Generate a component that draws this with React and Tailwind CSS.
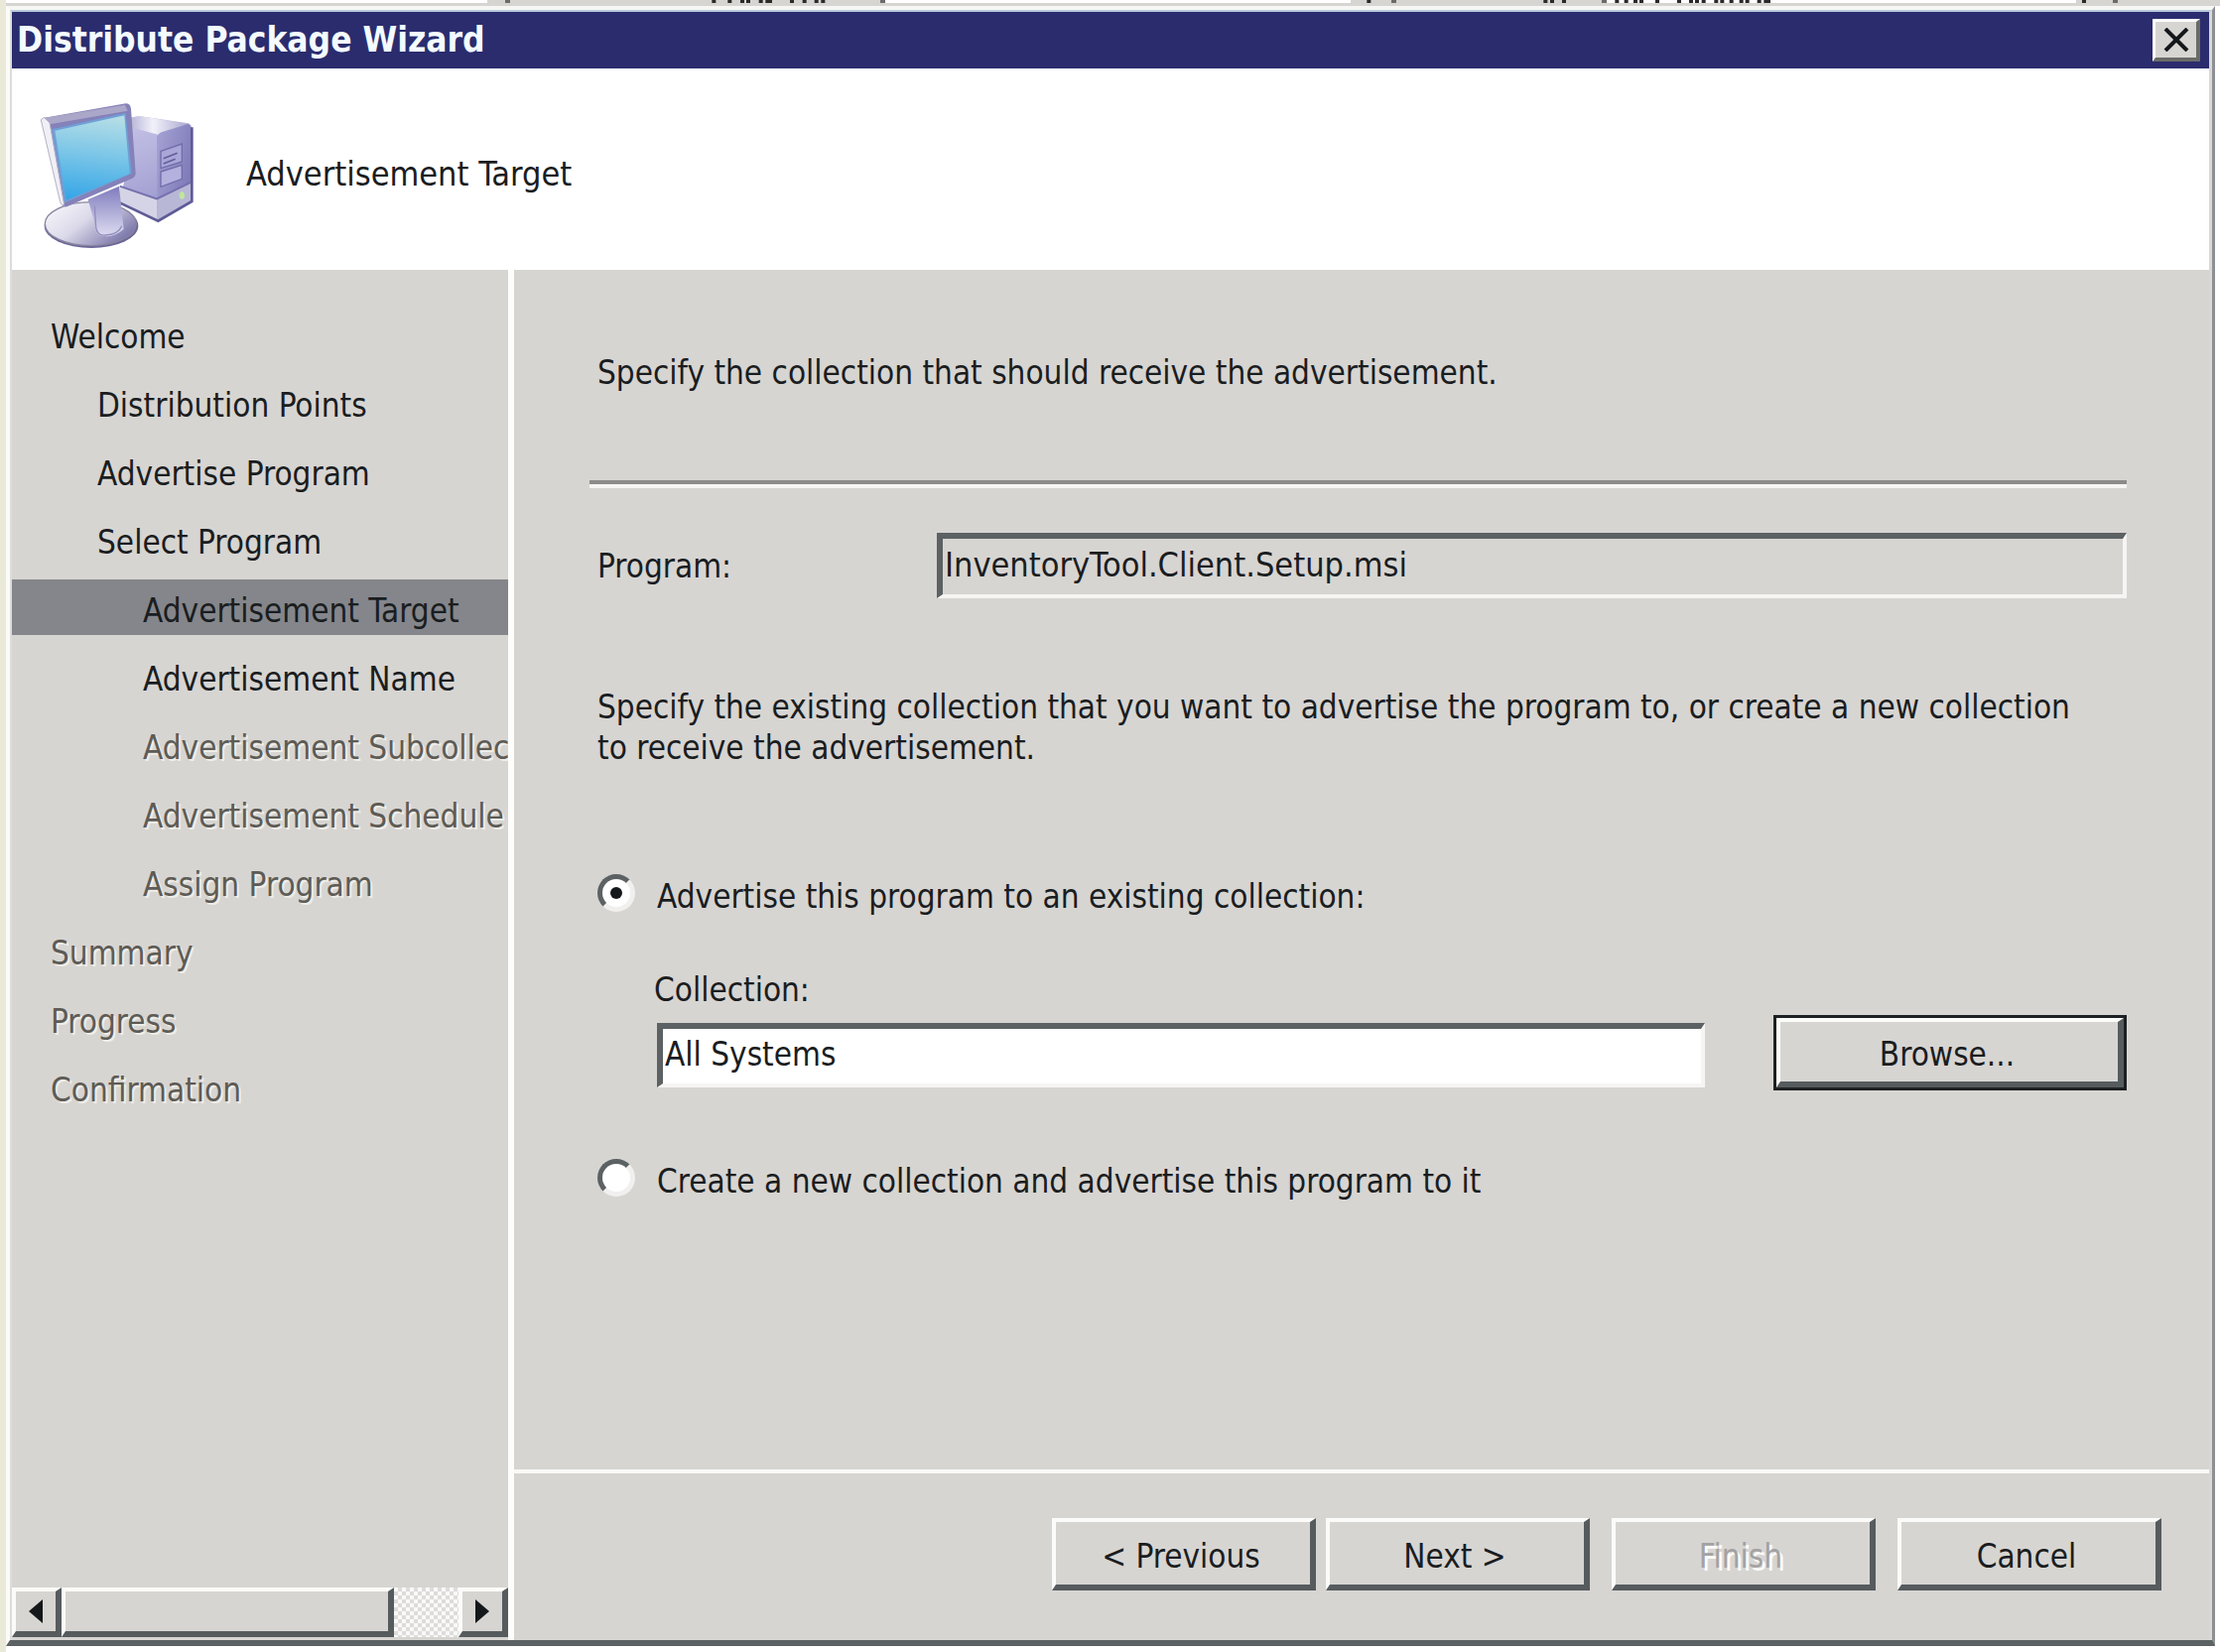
import React, { useState } from 'react';

const steps = [
  { label: 'Welcome', level: 0 },
  { label: 'Distribution Points', level: 1 },
  { label: 'Advertise Program', level: 1 },
  { label: 'Select Program', level: 1 },
  { label: 'Advertisement Target', level: 2, current: true },
  { label: 'Advertisement Name', level: 2 },
  { label: 'Advertisement Subcollec', level: 2, disabled: true },
  { label: 'Advertisement Schedule', level: 2, disabled: true },
  { label: 'Assign Program', level: 2, disabled: true },
  { label: 'Summary', level: 0, disabled: true },
  { label: 'Progress', level: 0, disabled: true },
  { label: 'Confirmation', level: 0, disabled: true },
];

const indent = ['pl-[39px]', 'pl-[86px]', 'pl-[132px]'];

const raised =
  'border-t-4 border-l-4 border-r-[6px] border-b-[6px] border-t-[#fbfbf9] border-l-[#fbfbf9] border-r-[#565b5e] border-b-[#565b5e] bg-[#d7d5d2]';
const sunken =
  'border-t-[6px] border-l-[6px] border-r-4 border-b-4 border-t-[#5c6163] border-l-[#5c6163] border-r-[#f6f5f3] border-b-[#f6f5f3]';

function ComputerIcon() {
  return (
    <svg viewBox="0 0 540 510" className="w-[180px] h-[170px] shrink-0" aria-hidden="true">
      <defs>
        <linearGradient id="screen" x1="0.5" y1="0" x2="0.4" y2="1">
          <stop offset="0" stopColor="#b4dde6" />
          <stop offset="0.45" stopColor="#7cc6e8" />
          <stop offset="1" stopColor="#36a6e6" />
        </linearGradient>
        <linearGradient id="side" x1="0" y1="0" x2="0.3" y2="1">
          <stop offset="0" stopColor="#c9c6e8" />
          <stop offset="1" stopColor="#9c99cf" />
        </linearGradient>
        <linearGradient id="front" x1="0" y1="0" x2="1" y2="0.6">
          <stop offset="0" stopColor="#a6a3d4" />
          <stop offset="1" stopColor="#7d79b8" />
        </linearGradient>
        <linearGradient id="top" x1="0" y1="0" x2="1" y2="0">
          <stop offset="0" stopColor="#b5b2d6" />
          <stop offset="0.4" stopColor="#f2f1f9" />
          <stop offset="1" stopColor="#a9a6cf" />
        </linearGradient>
        <linearGradient id="foot" x1="0" y1="0" x2="1" y2="0.6">
          <stop offset="0" stopColor="#fbfbfd" />
          <stop offset="0.5" stopColor="#dcdaea" />
          <stop offset="1" stopColor="#7e7aac" />
        </linearGradient>
        <linearGradient id="neck" x1="0" y1="0" x2="0" y2="1">
          <stop offset="0" stopColor="#7f7bbd" />
          <stop offset="1" stopColor="#dddcf0" />
        </linearGradient>
      </defs>
      {/* tower */}
      <path d="M300 84 L330 78 L480 100 Q490 104 490 120 L490 336 L392 394 L270 336 L290 260 Z" fill="url(#side)" />
      <path d="M300 84 L330 78 L482 102 L388 134 L305 112 Z" fill="url(#top)" />
      <path d="M384 142 Q388 130 400 126 L478 102 Q488 104 488 118 L488 334 L386 392 Z" fill="url(#front)" />
      <path d="M272 292 L384 330 L386 392 L272 338 Z" fill="#d5d4e6" />
      <path d="M384 330 L488 280 L488 334 L386 392 Z" fill="#b9b7d6" />
      <path d="M272 290 L384 328 L488 278" fill="none" stroke="#7571ad" strokeWidth="6" />
      <path d="M272 340 L388 395 L490 336 L490 112" fill="none" stroke="#5f5b96" strokeWidth="8" />
      <path d="M396 184 L460 162 L460 216 L396 236 Z" fill="#a9a6d8" stroke="#716da9" strokeWidth="4" />
      <path d="M404 206 L446 190 M404 222 L440 208" stroke="#625e9c" strokeWidth="5" />
      <path d="M396 246 L460 226 L460 268 L396 292 Z" fill="#b4b1df" stroke="#716da9" strokeWidth="4" />
      <ellipse cx="460" cy="318" rx="8" ry="11" fill="#bfe6a0" />
      {/* stand */}
      <ellipse cx="186" cy="410" rx="142" ry="67" fill="#6b6799" />
      <ellipse cx="184" cy="404" rx="138" ry="66" fill="url(#foot)" stroke="#88859f" strokeWidth="4" />
      <path d="M176 330 L270 290 L284 420 Q250 450 210 438 Q196 430 196 400 Z" fill="url(#neck)" />
      <path d="M196 350 L200 415 Q204 440 228 438 Q268 436 278 410" fill="none" stroke="#918ebd" strokeWidth="4" />
      {/* monitor */}
      <path d="M34 88 L40 84 L290 40 Q304 40 306 56 L320 250 Q320 262 310 266 L112 352 Q100 354 96 342 Z" fill="#8581b9" />
      <path d="M34 90 Q36 84 46 82 L60 98 L104 346 Q96 350 92 338 Z" fill="#f0eff5" stroke="#b5b3c6" strokeWidth="3" />
      <path d="M44 84 L288 44 L296 62 L64 102 Z" fill="#aaa7c9" />
      <path d="M66 118 L290 68 L308 252 L106 340 Z" fill="#6f9fd6" />
      <path d="M76 122 L286 76 L302 252 L110 332 Z" fill="url(#screen)" />
    </svg>
  );
}

// bottom edge of the window behind the dialog
function BackgroundStrip() {
  const ticks = [
    718, 766, 804, 822, 860, 880, 888, 954, 992, 1028, 1048,
  ].map((x) => 480 + x / 3);
  const ticks2 = [
    118, 652, 672, 708, 868, 896, 924, 942, 990, 1056, 1092, 1110, 1130, 1168, 1186, 1214, 1244, 1262, 1298, 1318, 1326,
  ].map((x) => 1340 + x / 3);
  return (
    <svg viewBox="0 0 2231 6" preserveAspectRatio="none" className="block w-full h-[6px]" aria-hidden="true">
      <rect width="2231" height="6" fill="#d7d5d2" />
      <rect width="485" height="3" fill="#ffffff" />
      <rect x="885" width="470" height="3" fill="#ffffff" />
      <rect x="1612" width="474" height="3" fill="#ffffff" />
      {[503, 881, 1396, 1608, 2123].map((x) => (
        <rect key={x} x={x} width="5" height="3" fill="#6b6b69" />
      ))}
      {[...ticks, ...ticks2, 2100].map((x) => (
        <rect key={x} x={x - 8} width="4" height="3" fill="#2a2a2a" />
      ))}
    </svg>
  );
}

function Arrow({ left }) {
  return (
    <svg viewBox="0 0 14 24" className="w-[14px] h-6" aria-hidden="true">
      <path d={left ? 'M14 0 L14 24 L0 12 Z' : 'M0 0 L0 24 L14 12 Z'} fill="#15181a" />
    </svg>
  );
}

function Radio({ id, label, checked, onChange }) {
  return (
    <div className="flex items-start">
      <span className="relative w-[38px] h-[38px] shrink-0">
        <input
          id={id}
          type="radio"
          name="target"
          checked={checked}
          onChange={onChange}
          className="appearance-none block w-full h-full rounded-full bg-white border-[5px] border-t-[#5c6163] border-l-[#5c6163] border-r-[#f1f0ee] border-b-[#f1f0ee]"
        />
        {checked && (
          <span className="absolute inset-0 m-auto w-3 h-3 rounded-full bg-[#15181a] pointer-events-none" />
        )}
      </span>
      <label htmlFor={id} className="pt-[2px] pl-[22px]">{label}</label>
    </div>
  );
}

function WizardButton({ children, className = '', disabled }) {
  return (
    <button
      type="button"
      disabled={disabled}
      className={`${raised} w-[266px] h-[73px] pt-[6px] pr-1 ${disabled ? 'text-[#a3a2a3] [text-shadow:3px_3px_0_#fbfbf9]' : ''} ${className}`}
    >
      {children}
    </button>
  );
}

export default function App() {
  const [target, setTarget] = useState('existing');
  const [collection, setCollection] = useState('All Systems');

  return (
    <div className="min-h-screen flex flex-col bg-white border-l-[6px] border-[#eae8d6] text-[#1a1d1f] text-[33px] leading-[41px] font-['DejaVu_Sans_Condensed','DejaVu_Sans',sans-serif]">
      <BackgroundStrip />
      <div className="flex-1 flex flex-col mr-[5px] mb-[6px] bg-[#d7d5d2] border-t-4 border-l-4 border-r-[3px] border-b-[6px] border-t-[#f6f6f4] border-l-[#fbfbf8] border-r-[#8c9093] border-b-[#5c6163]">
        <div className="flex-1 flex flex-col border-t-2 border-l-2 border-r-[3px] border-t-[#b9c9dc] border-l-[#dddcda] border-r-[#dad8d6]">
          <header className="flex items-center justify-between h-[57px] pl-[5px] pr-[9px] bg-[#2a2c6e]">
            <h1 className="text-[35px] font-bold text-[#f4fbff]">Distribute Package Wizard</h1>
            <button
              type="button"
              aria-label="Close"
              className="flex items-center justify-center w-12 h-[43px] bg-[#d7d5d2] border-t-[3px] border-l-[3px] border-r-4 border-b-4 border-t-white border-l-white border-r-[#6a6c68] border-b-[#6a6c68]"
            >
              <svg viewBox="0 0 26 24" className="w-[26px] h-6" aria-hidden="true">
                <path d="M2 1 L24 23 M24 1 L2 23" stroke="#15181a" strokeWidth="4" />
              </svg>
            </button>
          </header>

          <div className="flex items-center h-[203px] pt-[10px] pl-[18px] bg-white">
            <ComputerIcon />
            <h2 className="pl-[38px] text-[34px]">Advertisement Target</h2>
          </div>

          <div className="flex-1 flex">
            <aside className="w-[500px] shrink-0 flex flex-col justify-between">
              <ol className="flex flex-col gap-[13px] pt-[36px]">
                {steps.map((s) => (
                  <li
                    key={s.label}
                    aria-current={s.current ? 'step' : undefined}
                    className={`h-14 pt-[11px] overflow-hidden whitespace-nowrap ${indent[s.level]} ${
                      s.current ? 'bg-[#84868b]' : ''
                    } ${s.disabled ? 'text-[#5d5b55] [text-shadow:2px_2px_0_#efede8]' : ''}`}
                  >
                    {s.label}
                  </li>
                ))}
              </ol>
              <div className="flex h-[50px] mb-[3px]">
                <button type="button" aria-label="Scroll left" className={`${raised} w-[50px] flex items-center justify-center`}>
                  <Arrow left />
                </button>
                <div className={`${raised} w-[335px]`} />
                <div className="flex-1 bg-[#f7f7f6] bg-[conic-gradient(#dddcda_25%,#f9f9f8_0_50%,#dddcda_0_75%,#f9f9f8_0)] bg-[length:8px_8px]" />
                <button type="button" aria-label="Scroll right" className={`${raised} w-[50px] flex items-center justify-center`}>
                  <Arrow />
                </button>
              </div>
            </aside>

            <main className="flex-1 flex flex-col border-l-[6px] border-[#fdfdfb]">
              <div className="flex-1 pl-[84px] pr-[83px] pt-[83px]">
                <p>Specify the collection that should receive the advertisement.</p>
                <hr className="mt-[88px] -ml-2 h-2 border-t-4 border-b-4 border-t-[#8b8b89] border-b-[#f6f5f3]" />

                <div className="flex items-center mt-[45px]">
                  <label htmlFor="program" className="w-[342px]">Program:</label>
                  <input
                    id="program"
                    readOnly
                    value="InventoryTool.Client.Setup.msi"
                    className={`${sunken} flex-1 min-w-0 h-[66px] pl-[2px] pb-1 text-[34px] bg-[#d7d5d2]`}
                  />
                </div>

                <p className="mt-[89px] pr-8">
                  Specify the existing collection that you want to advertise the program to, or create a new collection
                  to receive the advertisement.
                </p>

                <div className="mt-[107px]">
                  <Radio
                    id="existing"
                    label="Advertise this program to an existing collection:"
                    checked={target === 'existing'}
                    onChange={() => setTarget('existing')}
                  />
                </div>
                <label htmlFor="collection" className="block mt-[53px] ml-[57px]">Collection:</label>
                <div className="flex items-end mt-[5px] ml-[60px]">
                  <input
                    id="collection"
                    value={collection}
                    onChange={(e) => setCollection(e.target.value)}
                    className={`${sunken} flex-1 min-w-0 h-[65px] mb-[3px] pl-[2px] pb-1 bg-white`}
                  />
                  <div className="ml-[69px] border-[3px] border-[#1d2022]">
                    <button type="button" className={`${raised} w-[350px] h-[70px] pt-1 pr-1`}>Browse...</button>
                  </div>
                </div>
                <div className="mt-[69px]">
                  <Radio
                    id="create"
                    label="Create a new collection and advertise this program to it"
                    checked={target === 'create'}
                    onChange={() => setTarget('create')}
                  />
                </div>
              </div>

              <footer className="flex justify-end pt-[45px] pb-[50px] pr-[48px] border-t-4 border-[#f9f9f7]">
                <WizardButton>&lt; Previous</WizardButton>
                <WizardButton className="ml-[10px]">Next &gt;</WizardButton>
                <WizardButton className="ml-[22px]" disabled>Finish</WizardButton>
                <WizardButton className="ml-[22px]">Cancel</WizardButton>
              </footer>
            </main>
          </div>
        </div>
      </div>
    </div>
  );
}
